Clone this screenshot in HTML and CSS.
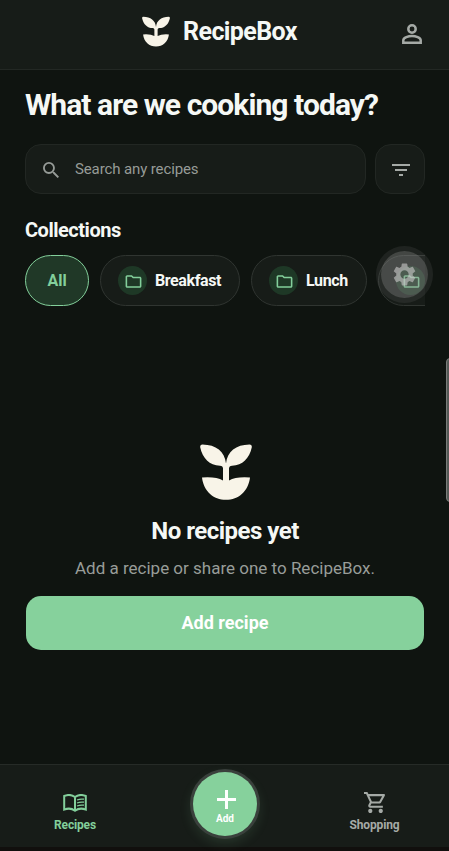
FILE: index.html
```html
<!DOCTYPE html>
<html lang="en">
<head>
<meta charset="utf-8">
<title>RecipeBox</title>
<link rel="stylesheet" href="styles.css">
</head>
<body>
<svg class="defs" width="0" height="0">
  <symbol id="sprout" viewBox="0 0 52 56">
    <path d="M2.500 .6C16 .8 24.800 7.500 26 19.500C27.200 7.500 36 .8 49.500 .6Q52 .6 51.800 3.200C49.500 14 42.500 21.500 32 21.700Q29 22 29 24.500V36.500Q36 32.300 50 33.400C48.500 47 38.500 55.800 26 55.800S3.500 47 2 33.400Q16 32.300 23 36.500V24.500Q23 22 20 21.700C9.500 21.500 2.500 14 .2 3.200Q0 .6 2.500 .6Z"/>
  </symbol>
  <symbol id="folder" viewBox="0 0 24 24">
    <path d="M9.170 6l2 2H20v10H4V6h5.170M10 4H4c-1.100 0-1.990.9-1.990 2L2 18c0 1.100.9 2 2 2h16c1.100 0 2-.9 2-2V8c0-1.100-.9-2-2-2h-8l-2-2z"/>
  </symbol>
</svg>
<div class="app">
  <header class="header">
    <div class="brand"><svg class="brand-logo"><use href="#sprout"/></svg><span class="brand-name">RecipeBox</span></div>
    <svg class="profile" viewBox="0 0 20 20"><circle cx="10" cy="5" r="3.700"/><path d="M1.300 18.700V16.200C1.300 13.600 6.500 12 10 12S18.700 13.600 18.700 16.200V18.700Z"/></svg>
  </header>
  <main class="main">
    <h1 class="title">What are we cooking today?</h1>
    <div class="search-row">
      <div class="search">
        <svg class="search-icon" viewBox="3 3 17.490 17.490"><path d="M15.500 14h-.79l-.28-.27A6.471 6.471 0 0 0 16 9.500 6.500 6.500 0 1 0 9.500 16c1.610 0 3.090-.59 4.230-1.570l.27.28v.79l5 4.990L20.490 19l-4.990-5zm-6 0C7.010 14 5 11.990 5 9.500S7.010 5 9.500 5 14 7.010 14 9.500 11.990 14 9.500 14z"/></svg>
        <span class="placeholder">Search any recipes</span>
      </div>
      <div class="filter"><svg viewBox="0 0 18 12"><path d="M0 0h18v2H0zM3 5h12v2H3zM7 10h4v2H7z"/></svg></div>
    </div>
    <h2 class="section">Collections</h2>
    <div class="chips">
      <div class="chip chip-all">All</div>
      <div class="chip chip-breakfast"><span class="badge"><svg><use href="#folder"/></svg></span><span>Breakfast</span></div>
      <div class="chip chip-lunch"><span class="badge"><svg><use href="#folder"/></svg></span><span>Lunch</span></div>
      <div class="chip chip-next"><span class="badge"><svg><use href="#folder"/></svg></span></div>
    </div>
    <section class="empty">
      <svg class="empty-logo"><use href="#sprout"/></svg>
      <h3 class="empty-title">No recipes yet</h3>
      <p class="empty-text"><span>Add a recipe or share one to RecipeBox.</span></p>
      <div class="primary"><span>Add recipe</span></div>
    </section>
  </main>
  <nav class="nav">
    <div class="tab tab-on">
      <svg class="book" viewBox="0 0 24 18"><path class="line" d="M12 3C9 .8 4.500.6 1.200 2V15.600C4.500 14.300 9 14.500 12 16.700C15 14.500 19.500 14.300 22.800 15.600V2C19.500.6 15 .8 12 3ZM12 3V16.500"/><path class="rule" d="M14 6Q17 4.700 21 5.200M14 9Q17 7.700 21 8.200M14 12Q17 10.700 21 11.200"/></svg>
      <span>Recipes</span>
    </div>
    <div class="add"><svg viewBox="0 0 19 19"><path d="M8 0h3v8h8v3h-8v8H8v-8H0V8h8z"/></svg><span>Add</span></div>
    <div class="tab">
      <svg class="cart" viewBox="1 2 21 20"><path d="M15.550 13c.75 0 1.410-.41 1.750-1.030l3.580-6.490A.996.996 0 0 0 20.010 4H5.210l-.94-2H1v2h2l3.600 7.590-1.350 2.440C4.520 15.370 5.480 17 7 17h12v-2H7l1.100-2h7.450zM6.160 6h12.150l-2.760 5H8.530L6.160 6zM7 18c-1.100 0-1.990.9-1.990 2S5.900 22 7 22s2-.9 2-2-.9-2-2-2zm10 0c-1.100 0-1.990.9-1.990 2s.89 2 1.990 2 2-.9 2-2-.9-2-2-2z"/></svg>
      <span>Shopping</span>
    </div>
  </nav>
  <div class="gear"><svg viewBox="2 2 20 20"><path d="M19.140 12.940c.04-.3.060-.61.060-.94 0-.32-.02-.64-.07-.94l2.030-1.580a.49.49 0 0 0 .12-.61l-1.920-3.320a.488.488 0 0 0-.59-.22l-2.390.96c-.5-.38-1.030-.7-1.620-.94l-.36-2.540a.484.484 0 0 0-.48-.41h-3.840c-.24 0-.43.17-.47.41l-.36 2.540c-.59.24-1.130.57-1.620.94l-2.390-.96c-.22-.08-.47 0-.59.22L2.740 8.870c-.12.21-.08.47.12.61l2.030 1.580c-.05.3-.09.63-.09.94s.02.64.07.94l-2.030 1.580a.49.49 0 0 0-.12.61l1.920 3.320c.12.22.37.29.59.22l2.390-.96c.5.38 1.030.7 1.620.94l.36 2.540c.05.24.24.41.48.41h3.840c.24 0 .44-.17.47-.41l.36-2.540c.59-.24 1.130-.56 1.620-.94l2.390.96c.22.08.47 0 .59-.22l1.920-3.320c.12-.22.070-.47-.12-.61l-2.010-1.580zM12 15.600A3.600 3.600 0 1 1 12 8.400a3.600 3.600 0 0 1 0 7.200z"/></svg></div>
  <div class="edge"></div>
</div>
</body>
</html>
```
FILE: styles.css
```css
* { box-sizing: border-box; }
body { margin: 0; background: #0f1410; color: #f5f8f5; font-family: Roboto, "Liberation Sans", sans-serif; font-weight: 700; }
h1, h2, h3, p { margin: 0; white-space: nowrap; }
svg { display: block; fill: currentColor; flex: none; }
.defs { position: absolute; }
.app { position: relative; width: 449px; height: 851px; overflow: hidden; display: flex; flex-direction: column; }
.header { height: 70px; flex: none; background: #171c18; border-bottom: 1px solid #232824; display: grid; grid-template-columns: 1fr auto 1fr; padding: 0 27px 5px; align-items: center; }
.brand { grid-column: 2; display: flex; align-items: center; gap: 13px; margin-right: 10px; }
.brand-logo { width: 28px; height: 31px; color: #f8f4e8; margin-bottom: 1px; }
.brand-name { font-size: 25px; line-height: 30px; letter-spacing: -.6px; }
.profile { width: 20px; height: 20px; justify-self: end; margin-top: 3px; fill: none; stroke: #a5aaa6; stroke-width: 2.500; }
.main { flex: 1; min-height: 0; padding: 0 24px 0 25px; display: flex; flex-direction: column; }
.title { margin-top: 17px; height: 36px; line-height: 36px; font-size: 30px; letter-spacing: -.93px; }
.search-row { display: flex; gap: 9px; margin-top: 21px; height: 50px; }
.search, .filter { background: #171c18; border: 1px solid #222723; border-radius: 16px; display: flex; align-items: center; }
.search { flex: 1; padding-left: 17px; gap: 16px; color: #969b97; }
.search-icon { width: 16px; height: 16px; margin-top: 2px; }
.placeholder { font-size: 15px; font-weight: 400; letter-spacing: -.12px; }
.filter { width: 50px; justify-content: center; color: #a5aaa6; padding: 2px 0 0 2px; }
.filter svg { width: 18px; height: 12px; }
.section { margin-top: 24px; height: 24px; line-height: 24px; font-size: 20px; letter-spacing: -.48px; }
.chips { display: flex; gap: 11px; margin-top: 12.500px; height: 51px; overflow: hidden; }
.chip { flex: none; height: 51px; border: 1px solid #303531; background: #171c18; border-radius: 26px; display: flex; align-items: center; gap: 8px; padding-left: 17px; font-size: 16px; letter-spacing: -.4px; }
.chip-all { width: 64px; padding: 0; justify-content: center; background: #203827; border-color: #83d09b; color: #83cf9b; letter-spacing: 0; }
.chip-breakfast { width: 140px; }
.chip-lunch { width: 116px; }
.chip-next { width: 116px; }
.badge { width: 29px; height: 29px; border-radius: 50%; background: #1e3826; color: #83cf9b; display: flex; align-items: center; justify-content: center; }
.badge svg { width: 19px; height: 19px; margin-top: 2px; margin-left: 1px; }
.empty { display: flex; flex-direction: column; align-items: center; margin-top: 138.500px; }
.empty-logo { width: 52px; height: 56px; color: #f8f4e8; margin-left: 1px; }
.empty-title { font-size: 24px; line-height: 30px; margin-top: 16px; letter-spacing: -.5px; }
.empty-text { font-size: 17px; line-height: 24px; font-weight: 400; color: #989d99; margin-top: 10px; }
.primary { width: 398px; height: 54px; margin-top: 16px; background: #86d19c; border-radius: 15px; color: #fff; font-size: 18px; display: flex; align-items: center; justify-content: center; padding-bottom: 2px; }
.nav { height: 87px; flex: none; background: #171c18; border-top: 1px solid #262b27; border-bottom: 4px solid #110f0d; display: grid; grid-template-columns: 150px 150px 149px; justify-items: center; }
.tab { display: flex; flex-direction: column; align-items: center; justify-content: flex-end; color: #a5aaa6; font-size: 12px; line-height: 16px; padding-bottom: 14px; gap: 3px; letter-spacing: -.15px; }
.tab-on { color: #83cf9b; }
.book { width: 24px; height: 18px; margin: 0 0 2px 1px; fill: none; stroke: currentColor; }
.line { stroke-width: 2; }
.rule { stroke-width: 1.300; }
.cart { width: 22px; height: 21px; margin: 0 0 1px 1px; }
.add { width: 64px; height: 64px; margin-top: 7px; border-radius: 50%; background: #86d19c; box-shadow: 0 0 0 3px #3a403c, 0 5px 13px 1px rgba(134, 209, 156, .16); color: #fff; display: flex; flex-direction: column; align-items: center; padding-top: 18px; gap: 3px; font-size: 10px; line-height: 14px; }
.add svg { width: 19px; height: 19px; margin-left: 3px; }
.gear { position: absolute; left: 376px; top: 246px; width: 57px; height: 57px; border-radius: 50%; border: 5px solid rgba(150, 150, 150, .12); background: rgba(145, 145, 145, .4); background-clip: padding-box; color: rgba(200, 200, 200, .62); display: flex; align-items: center; justify-content: center; }
.gear svg { width: 23px; height: 23px; }
.edge { position: absolute; left: 446px; top: 358px; width: 8px; height: 144px; border-radius: 5px; background: #555956; border: 1px solid #7b7e7b; }
```
